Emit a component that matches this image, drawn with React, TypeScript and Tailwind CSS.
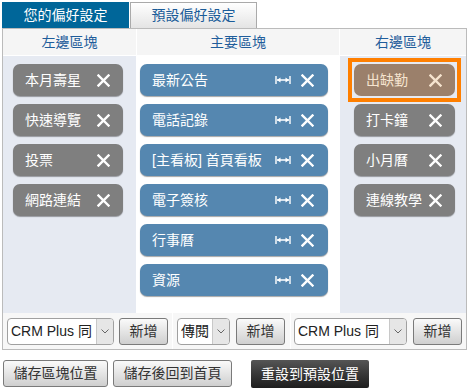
import React from "react";

const FONT = { fontFamily: '"Liberation Sans", "Noto Sans CJK TC", sans-serif' };

function XIcon({ color = "#ffffff" }: { color?: string }) {
  return (
    <svg width="13" height="13" viewBox="0 0 13 13">
      <path d="M1.5 1.5 L11.5 11.5 M11.5 1.5 L1.5 11.5" stroke={color} strokeWidth="2.4" strokeLinecap="square" />
    </svg>
  );
}

function ResizeIcon() {
  return (
    <svg width="16" height="10" viewBox="0 0 16 10">
      <path d="M1 1 V9 M15 1 V9 M2 5 H14" stroke="#ffffff" strokeWidth="1.4" />
      <path d="M2 5 L5.5 2.5 V7.5 Z M14 5 L10.5 2.5 V7.5 Z" fill="#ffffff" />
    </svg>
  );
}

function GrayItem({ label }: { label: string }) {
  return (
    <div className="h-[32px] w-[110px] ml-[10px] rounded-[7px] bg-[#7f7f7f] shadow-[0_1px_1px_rgba(0,0,0,0.35)] flex items-center justify-between pl-[12px] pr-[13px] text-white text-[14px]">
      <span>{label}</span>
      <XIcon />
    </div>
  );
}

function BlueItem({ label }: { label: string }) {
  return (
    <div className="h-[32px] w-[188px] ml-[3px] rounded-[7px] bg-[#5587b0] shadow-[0_1px_1px_rgba(0,0,0,0.35)] flex items-center pl-[12px] pr-[14px] text-white text-[14px]">
      <span className="flex-1">{label}</span>
      <ResizeIcon />
      <span className="ml-[10px] flex"><XIcon /></span>
    </div>
  );
}

function RightItem({ label }: { label: string }) {
  return (
    <div className="h-[32px] w-[101px] ml-[14px] rounded-[7px] bg-[#7f7f7f] shadow-[0_1px_1px_rgba(0,0,0,0.35)] flex items-center justify-between pl-[12px] pr-[13px] text-white text-[14px]">
      <span>{label}</span>
      <XIcon />
    </div>
  );
}

function ActiveRightItem({ label }: { label: string }) {
  return (
    <div className="ml-[8px] -my-[6px] w-[113px] border-4 border-[#ff7f00] p-[2px]">
      <div className="h-[32px] w-[101px] rounded-[7px] bg-[#9b806b] flex items-center justify-between pl-[12px] pr-[13px] text-[#f6e4cf] text-[14px]">
        <span>{label}</span>
        <XIcon color="#f6e4cf" />
      </div>
    </div>
  );
}

function Select({ label, width }: { label: string; width: string }) {
  return (
    <div className={`${width} h-[27px] flex rounded-[4px] border border-[#a0a0a0] bg-white overflow-hidden text-[14px] text-[#222]`}>
      <div className="flex-1 flex items-center pl-[3px] whitespace-nowrap overflow-hidden">{label}</div>
      <div className="w-[17px] border-l border-[#c8c8c8] bg-[#e6e6e6] flex items-center justify-center">
        <svg width="8" height="5" viewBox="0 0 8 5">
          <path d="M0.5 0.5 L4 4 L7.5 0.5" stroke="#666" strokeWidth="1" fill="none" />
        </svg>
      </div>
    </div>
  );
}

function AddButton() {
  return (
    <div className="w-[49px] h-[27px] rounded-[3px] border border-[#7a7a7a] bg-gradient-to-b from-[#fafafa] to-[#cfcfcf] flex items-center justify-center text-[14px] text-[#333]">
      新增
    </div>
  );
}

export default function App() {
  return (
    <div className="w-[468px] h-[392px] bg-white overflow-hidden" style={FONT}>
      <div className="flex pt-[2px] pl-[2px]">
        <div className="w-[127px] h-[26px] bg-[#006699] text-white text-[14px] flex items-center justify-center">
          您的偏好設定
        </div>
        <div className="w-[127px] h-[26px] ml-px border border-b-0 border-[#aaaaaa] bg-gradient-to-b from-white to-[#e4e4e4] text-[#1a5c99] text-[14px] flex items-center justify-center">
          預設偏好設定
        </div>
      </div>
      <div className="ml-[2px] w-[465px] border border-[#bbbbbb] bg-white">
        <div className="grid grid-cols-[133px_202px_126px] gap-x-px gap-y-px">
          <div className="h-[26px] bg-[#f5f5f5] flex items-center justify-center text-[14px] text-[#1f5d9b]">左邊區塊</div>
          <div className="h-[26px] bg-[#f5f5f5] flex items-center justify-center text-[14px] text-[#1f5d9b]">主要區塊</div>
          <div className="h-[26px] bg-[#f5f5f5] flex items-center justify-center text-[14px] text-[#1f5d9b]">右邊區塊</div>

          <div className="h-[257px] bg-[#e6eaf2] pt-[8px] flex flex-col gap-[8px]">
            <GrayItem label="本月壽星" />
            <GrayItem label="快速導覽" />
            <GrayItem label="投票" />
            <GrayItem label="網路連結" />
          </div>
          <div className="h-[257px] bg-white pt-[8px] flex flex-col gap-[8px]">
            <BlueItem label="最新公告" />
            <BlueItem label="電話記錄" />
            <BlueItem label="[主看板] 首頁看板" />
            <BlueItem label="電子簽核" />
            <BlueItem label="行事曆" />
            <BlueItem label="資源" />
          </div>
          <div className="h-[257px] bg-[#e6eaf2] pt-[8px] flex flex-col gap-[8px]">
            <ActiveRightItem label="出缺勤" />
            <RightItem label="打卡鐘" />
            <RightItem label="小月曆" />
            <RightItem label="連線教學" />
          </div>
        </div>
        <div className="grid grid-cols-[169px_117px_175px] gap-x-px bg-white">
          <div className="h-[36px] bg-[#f7f7f7] flex items-center pl-[4px] gap-[5px]">
            <Select label="CRM Plus 同" width="w-[107px]" />
            <AddButton />
          </div>
          <div className="h-[36px] bg-[#f7f7f7] flex items-center pl-[4px] gap-[6px]">
            <Select label="傳閱" width="w-[53px]" />
            <AddButton />
          </div>
          <div className="h-[36px] bg-[#f7f7f7] flex items-center pl-[3px] gap-[6px]">
            <Select label="CRM Plus 同" width="w-[113px]" />
            <AddButton />
          </div>
        </div>
      </div>
      <div className="flex items-start pl-[3px] pt-[10px]">
        <div className="w-[105px] h-[27px] rounded-[3px] border border-[#7a7a7a] bg-gradient-to-b from-[#fafafa] to-[#cfcfcf] flex items-center justify-center text-[14px] text-[#333]">
          儲存區塊位置
        </div>
        <div className="ml-[5px] w-[119px] h-[27px] rounded-[3px] border border-[#7a7a7a] bg-gradient-to-b from-[#fafafa] to-[#cfcfcf] flex items-center justify-center text-[14px] text-[#333]">
          儲存後回到首頁
        </div>
        <div className="ml-[19px] w-[118px] h-[28px] rounded-[2px] bg-gradient-to-b from-[#555555] to-[#1e1e1e] flex items-center justify-center text-[14px] text-white">
          重設到預設位置
        </div>
      </div>
    </div>
  );
}
